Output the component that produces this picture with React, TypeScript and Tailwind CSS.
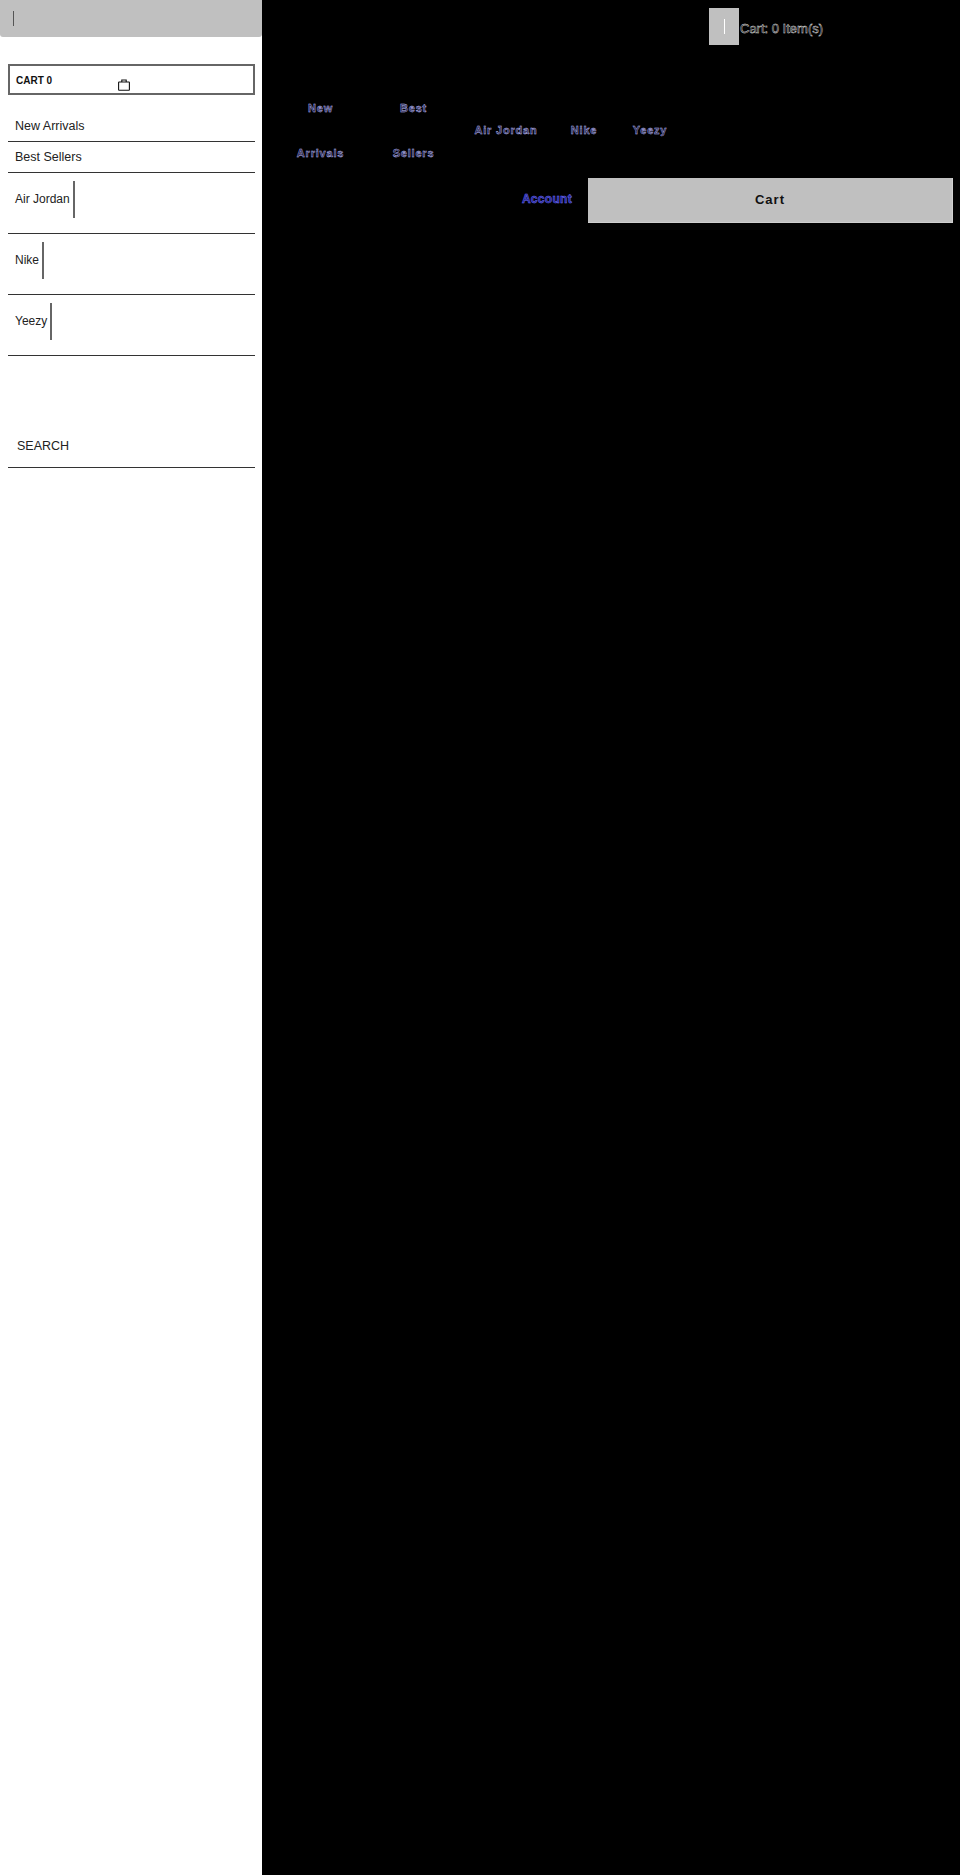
import React from 'react';

const navItems = [
  { label: 'New Arrivals', width: 'w-[93px] px-[20px]' },
  { label: 'Best Sellers', width: 'w-[93px] px-[20px]' },
  { label: 'Air Jordan', width: 'w-[92px]' },
  { label: 'Nike', width: 'w-[64px]' },
  { label: 'Yeezy', width: 'w-[68px]' },
];

const BagIcon = () => (
  <svg width="12" height="12" viewBox="0 0 12 12" fill="none" stroke="#111" strokeWidth="1.1">
    <rect x="0.6" y="3" width="10.8" height="8.2" rx="0.5" />
    <path d="M3.8 3V1h4.4v2" />
  </svg>
);

const SideLink = ({ label, height, pad }: { label: string; height: string; pad: string }) => (
  <a className={`${height} ${pad} flex items-end border-b border-[#333] pl-[7px] text-[12.5px] leading-[18px] text-[#222]`}>
    {label}
  </a>
);

const SideDropdown = ({ label }: { label: string }) => (
  <div className="flex h-[61px] items-start border-b border-[#333] pl-[7px] pt-[8px]">
    <span className="mt-[9px] text-[12px] leading-[18px] text-[#222]">{label}</span>
    <span className="ml-[3px] h-[37px] w-[2px] bg-[#666]" />
  </div>
);

const App = () => {
  return (
    <div className="flex h-[1875px] w-[960px] font-['Liberation_Sans',Arial,sans-serif]">
      <aside className="h-full w-[262px] shrink-0 bg-white">
        <div className="flex h-[37px] items-center rounded-b-[3px] bg-[#c0c0c0] pl-[13px]">
          <span className="h-[15px] w-px bg-[#555]" />
        </div>
        <div className="pl-[8px] pr-[7px] pt-[27px]">
          <div className="relative h-[31px] border-2 border-[#666] pl-[6px] pt-[8px] text-[10px] font-bold leading-[14px] text-[#111]">
            CART 0
            <span className="absolute left-[108px] top-[13px]">
              <BagIcon />
            </span>
          </div>
          <div className="pt-[15px]">
            <SideLink label="New Arrivals" height="h-[32px]" pad="pb-[6px]" />
            <SideLink label="Best Sellers" height="h-[31px]" pad="pb-[6px]" />
            <SideDropdown label="Air Jordan" />
            <SideDropdown label="Nike" />
            <SideDropdown label="Yeezy" />
          </div>
          <div className="mt-[81px] h-[31px] border-b border-[#333] pl-[9px] text-[12.5px] leading-[18px] text-[#222]">
            SEARCH
          </div>
        </div>
      </aside>

      <main className="min-w-0 flex-1 bg-black">
        <div className="flex h-[45px] items-end pl-[447px]">
          <div className="flex h-[37px] w-[30px] items-center justify-center bg-[#c0c0c0]">
            <span className="h-[15px] w-px bg-white" />
          </div>
          <span className="ml-[1px] self-center pt-[12px] text-[13px] leading-[18px] text-black [-webkit-text-stroke:0.4px_#e8e8e8]">
            Cart: 0 Item(s)
          </span>
        </div>

        <nav className="flex h-[133px] items-center pl-[12px] pt-[38px]">
          {navItems.map(item => (
            <a
              key={item.label}
              className={`${item.width} text-center text-[11px] font-bold leading-[45px] tracking-[0.8px] text-[#202040] [-webkit-text-stroke:0.4px_#c0c0ff]`}
            >
              {item.label}
            </a>
          ))}
        </nav>

        <div className="flex items-center justify-end pr-[7px]">
          <a className="mb-[4px] mr-[16px] text-[12px] font-bold tracking-[0.3px] text-[#202080] [-webkit-text-stroke:0.5px_#7070ff]">
            Account
          </a>
          <button className="h-[45px] w-[365px] border-b border-r border-[#cfcfcf] bg-[#c0c0c0] text-[13px] font-bold tracking-[1px] text-[#111]">
            Cart
          </button>
        </div>
      </main>
    </div>
  );
};

export default App;
